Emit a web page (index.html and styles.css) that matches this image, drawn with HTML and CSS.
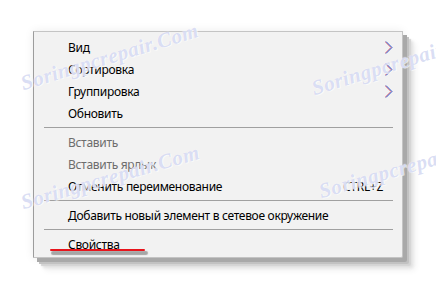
FILE: index.html
```html
<!DOCTYPE html>
<html lang="ru">

<head>
  <meta charset="UTF-8">
  <title>Контекстное меню</title>
  <link rel="stylesheet" href="styles.css">
</head>

<body>
  <div class="menu">
    <div class="item">
      <span class="label">Вид</span>
      <span class="sub"><svg width="8" height="13" viewBox="0 0 8 13"><polyline class="red" points="0,0.5 6,6.5 0,12.5" /><polyline class="blue" points="1,0.5 7,6.5 1,12.5" /></svg></span>
    </div>
    <div class="item">
      <span class="label">Сортировка</span>
      <span class="sub"><svg width="8" height="13" viewBox="0 0 8 13"><polyline class="red" points="0,0.5 6,6.5 0,12.5" /><polyline class="blue" points="1,0.5 7,6.5 1,12.5" /></svg></span>
    </div>
    <div class="item">
      <span class="label">Группировка</span>
      <span class="sub"><svg width="8" height="13" viewBox="0 0 8 13"><polyline class="red" points="0,0.5 6,6.5 0,12.5" /><polyline class="blue" points="1,0.5 7,6.5 1,12.5" /></svg></span>
    </div>
    <div class="item">
      <span class="label">Обновить</span>
      <span class="sub"></span>
    </div>
    <div class="sep"></div>
    <div class="item disabled">
      <span class="label">Вставить</span>
      <span class="sub"></span>
    </div>
    <div class="item disabled">
      <span class="label">Вставить ярлык</span>
      <span class="sub"></span>
    </div>
    <div class="item">
      <span class="label">Отменить переименование</span>
      <span class="key">CTRL+Z</span>
      <span class="sub"></span>
    </div>
    <div class="sep"></div>
    <div class="item">
      <span class="label">Добавить новый элемент в сетевое окружение</span>
      <span class="sub"></span>
    </div>
    <div class="sep"></div>
    <div class="item">
      <span class="label">Свойства</span>
      <span class="sub"></span>
    </div>
  </div>

  <!-- annotation and watermarks drawn over the screenshot -->
  <div class="mark"></div>
  <div class="wm wm-1">Soringpcrepair.Com</div>
  <div class="wm wm-2">Soringpcrepair.Com</div>
  <div class="wm wm-3">Soringpcrepair.Com</div>
  <div class="wm wm-4">Soringpcrepair.Com</div>
</body>

</html>
```

FILE: styles.css
```css
body {
  margin: 0;
  padding: 31px 0 0 33px;
  background: #fff;
  font-family: "Noto Sans", "Segoe UI", sans-serif;
  font-size: 12px;
  letter-spacing: -0.3px;
  color: #000;
  overflow: hidden;
  height: 291px;
  box-sizing: border-box;
  position: relative;
}

.menu {
  width: 368px;
  background: #f2f2f2;
  border: 1px solid #c4c4c4;
  border-left-color: #9c9c9c;
  padding: 4px 0 2px 0;
  box-shadow:
    4px 4px 0 #a9a9a9,
    6px 6px 0 #c2c2c2,
    8px 8px 1px #d4d4d4,
    10px 10px 3px #e2e2e2,
    12px 12px 6px #eeeeee,
    0 0 10px rgba(0, 0, 0, 0.08);
  border-radius: 0 0 2px 0;
}

.item {
  display: flex;
  align-items: center;
  height: 22px;
  padding-left: 34px;
  white-space: nowrap;
}

.label {
  flex: 1;
}

.sub {
  width: 19px;
  height: 22px;
  display: flex;
  align-items: center;
  padding-left: 2px;
  box-sizing: border-box;
}

.sub svg {
  display: block;
}

.sub .red {
  fill: none;
  stroke: #e0303a;
  stroke-width: 1;
  opacity: 0.8;
}

.sub .blue {
  fill: none;
  stroke: #2f5fd6;
  stroke-width: 1;
}

.disabled {
  color: #6d6d6d;
}

.sep {
  height: 7px;
  margin: 0 9px 0 10px;
  position: relative;
}

.sep::after {
  content: "";
  position: absolute;
  left: 0;
  right: 0;
  top: 3px;
  height: 1px;
  background: #a0a0a0;
}

.mark {
  position: absolute;
  left: 50px;
  top: 249px;
  width: 95px;
  height: 2px;
  background: #e8141c;
  border-radius: 1px;
  box-shadow: 2px 3px 1px 1px #a6a6a6;
}

.wm {
  position: absolute;
  font-family: "Liberation Serif", serif;
  font-style: italic;
  font-weight: bold;
  font-size: 21px;
  letter-spacing: 0.5px;
  color: rgba(165, 175, 228, 0.42);
  text-shadow: 0 0 1px #fff, 1px 1px 0 rgba(255, 255, 255, 0.6);
  transform-origin: 0 100%;
  white-space: nowrap;
  pointer-events: none;
}

.wm-1 {
  left: 25px;
  top: 71px;
  transform: rotate(-17deg);
}

.wm-2 {
  left: 316px;
  top: 76px;
  transform: rotate(-17deg);
}

.wm-3 {
  left: 25px;
  top: 190px;
  transform: rotate(-16deg);
}

.wm-4 {
  left: 323px;
  top: 179px;
  transform: rotate(-16deg);
}
```
